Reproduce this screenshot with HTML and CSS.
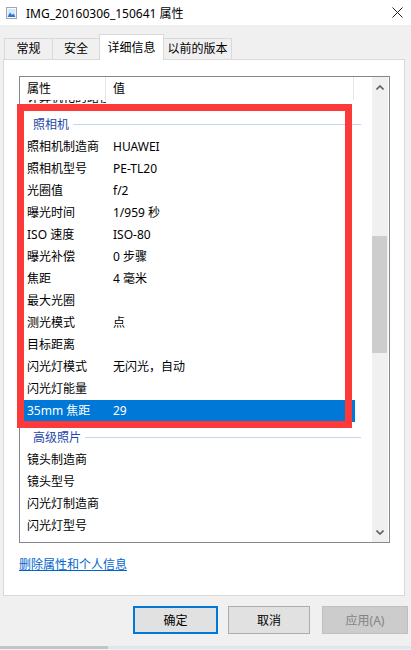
FILE: index.html
```html
<!DOCTYPE html>
<html lang="zh-CN">
<head>
    <meta charset="UTF-8">
    <meta name="viewport" content="width=device-width, initial-scale=1.0">
    <title>IMG_20160306_150641 属性</title>
    <link rel="stylesheet" href="styles.css">
</head>
<body>
    <div class="titlebar">
        <svg class="file-icon" width="11" height="12" viewBox="0 0 11 12">
            <rect x="0.5" y="0.5" width="10" height="11" fill="#fff" stroke="#9aa7b8"/>
            <rect x="1.5" y="2" width="8" height="8" fill="#d6e8fa"/>
            <path d="M1.5 10 L4 5.5 L6 8 L7.5 6.5 L9.5 10 Z" fill="#2b78d0"/>
        </svg>
        <span class="title">IMG_20160306_150641 属性</span>
        <svg class="close" width="11" height="11" viewBox="0 0 11 11">
            <path d="M0.5 0.5 L10.5 10.5 M10.5 0.5 L0.5 10.5" stroke="#222" stroke-width="1"/>
        </svg>
    </div>

    <div class="tabs">
        <div class="tab t1">常规</div>
        <div class="tab t2">安全</div>
        <div class="tab active">详细信息</div>
        <div class="tab t4">以前的版本</div>
    </div>

    <div class="panel">
        <div class="listbox">
            <div class="list-main">
                <div class="list-header">
                    <div class="col-name">属性</div>
                    <div class="col-value">值</div>
                    <div class="col-rest"></div>
                </div>
                <div class="list-body">
                    <div class="row cut"><span class="col-name">计算机化的路径</span><span class="col-value"></span></div>
                    <div class="group"><span>照相机</span><i></i></div>
                    <div class="row"><span class="col-name">照相机制造商</span><span class="col-value">HUAWEI</span></div>
                    <div class="row"><span class="col-name">照相机型号</span><span class="col-value">PE-TL20</span></div>
                    <div class="row"><span class="col-name">光圈值</span><span class="col-value">f/2</span></div>
                    <div class="row"><span class="col-name">曝光时间</span><span class="col-value">1/959 秒</span></div>
                    <div class="row"><span class="col-name">ISO 速度</span><span class="col-value">ISO-80</span></div>
                    <div class="row"><span class="col-name">曝光补偿</span><span class="col-value">0 步骤</span></div>
                    <div class="row"><span class="col-name">焦距</span><span class="col-value">4 毫米</span></div>
                    <div class="row"><span class="col-name">最大光圈</span><span class="col-value"></span></div>
                    <div class="row"><span class="col-name">测光模式</span><span class="col-value">点</span></div>
                    <div class="row"><span class="col-name">目标距离</span><span class="col-value"></span></div>
                    <div class="row"><span class="col-name">闪光灯模式</span><span class="col-value">无闪光，自动</span></div>
                    <div class="row"><span class="col-name">闪光灯能量</span><span class="col-value"></span></div>
                    <div class="row selected"><span class="col-name">35mm 焦距</span><span class="col-value">29</span></div>
                    <div class="group"><span>高级照片</span><i></i></div>
                    <div class="row"><span class="col-name">镜头制造商</span><span class="col-value"></span></div>
                    <div class="row"><span class="col-name">镜头型号</span><span class="col-value"></span></div>
                    <div class="row"><span class="col-name">闪光灯制造商</span><span class="col-value"></span></div>
                    <div class="row"><span class="col-name">闪光灯型号</span><span class="col-value"></span></div>
                </div>
                <div class="mark"></div>
            </div>
            <div class="scrollbar">
                <svg class="arrow" width="8" height="5" viewBox="0 0 8 5"><path d="M0.5 4.5 L4 1 L7.5 4.5" fill="none" stroke="#606060" stroke-width="1.6"/></svg>
                <div class="track"><div class="thumb"></div></div>
                <svg class="arrow" width="8" height="5" viewBox="0 0 8 5"><path d="M0.5 0.5 L4 4 L7.5 0.5" fill="none" stroke="#606060" stroke-width="1.6"/></svg>
            </div>
        </div>
        <a class="remove-link" href="#">删除属性和个人信息</a>
    </div>

    <div class="buttons">
        <button class="btn default">确定</button>
        <button class="btn cancel">取消</button>
        <button class="btn apply" disabled>应用(A)</button>
    </div>
    <div class="bottom-edge"></div>
</body>
</html>
```

FILE: styles.css
```css
body {
    margin: 0;
    width: 411px;
    height: 650px;
    overflow: hidden;
    background-color: #f0f0f0;
    font-family: "Noto Sans", "Noto Sans CJK SC", sans-serif;
    font-size: 12px;
    color: #000;
}
.titlebar {
    height: 25px;
    background: #fff;
    display: flex;
    align-items: center;
    padding: 0 8px 0 6px;
}
.file-icon {
    margin-top: 1px;
}
.title {
    margin-left: 9px;
    font-size: 12px;
    flex: 1;
}
.tabs {
    height: 34px;
    display: flex;
    align-items: flex-end;
    padding-left: 4px;
    position: relative;
    z-index: 1;
}
.tab {
    box-sizing: border-box;
    height: 21px;
    line-height: 20px;
    text-align: center;
    white-space: nowrap;
    border: 1px solid #d9d9d9;
    border-bottom: none;
    margin-right: -1px;
    background: #f0f0f0;
}
.tab.t1 { width: 49px; }
.tab.t2 { width: 48px; }
.tab.t4 { width: 69px; }
.tab.active {
    width: 65px;
    height: 26px;
    line-height: 25px;
    background: #fff;
    margin-bottom: -1px;
    position: relative;
    z-index: 2;
}
.panel {
    box-sizing: border-box;
    margin: 0 6px 0 3px;
    height: 537px;
    border: 1px solid #d9d9d9;
    background: #fff;
    padding: 16px 15px 0 15px;
}
.listbox {
    box-sizing: border-box;
    width: 371px;
    height: 467px;
    border: 1px solid #828790;
    display: flex;
}
.list-main {
    width: 352px;
    position: relative;
}
.list-header {
    height: 23px;
    display: flex;
    align-items: center;
}
.list-header .col-name,
.list-header .col-value {
    height: 23px;
    line-height: 23px;
    border-right: 1px solid #e5e5e5;
}
.col-name {
    box-sizing: border-box;
    width: 86px;
    padding-left: 7px;
    flex: none;
    white-space: nowrap;
}
.col-value {
    box-sizing: border-box;
    width: 248px;
    padding-left: 7px;
    flex: none;
    white-space: nowrap;
}
.list-body {
    height: 442px;
    overflow: hidden;
}
.row {
    height: 22px;
    line-height: 22px;
    display: flex;
    width: 334px;
}
.row .col-name {
    width: 86px;
    overflow: hidden;
}
.row.cut {
    margin-top: -13px;
}
.row.selected {
    background: #0078d7;
    color: #fff;
    width: 335px;
}
.group {
    height: 27px;
    display: flex;
    align-items: center;
    padding: 3px 0 0 13px;
    box-sizing: border-box;
    color: #1e47a8;
}
.group i {
    flex: 1;
    height: 1px;
    background: #c5d6ee;
    margin: 0 11px 0 4px;
}
.mark {
    position: absolute;
    left: -3px;
    top: 27px;
    width: 321px;
    height: 310px;
    border: 7px solid #fd3a3a;
    pointer-events: none;
}
.scrollbar {
    width: 16px;
    background: #f0f0f0;
    display: flex;
    flex-direction: column;
    align-items: center;
}
.arrow {
    margin: 8px 0 4px;
    flex: none;
}
.scrollbar .arrow:last-child {
    margin: 4px 0 7px;
}
.track {
    flex: 1;
    width: 16px;
    position: relative;
}
.thumb {
    position: absolute;
    left: 0;
    width: 15px;
    top: 142px;
    height: 117px;
    background: #cdcdcd;
}
.remove-link {
    display: inline-block;
    margin: 14px 0 0 0;
    color: #0066cc;
    text-decoration: underline;
    line-height: 16px;
}
.buttons {
    display: flex;
    padding: 10px 0 0 133px;
}
.btn {
    box-sizing: border-box;
    height: 28px;
    font-family: inherit;
    font-size: 12px;
    background: #e1e1e1;
    border: 1px solid #adadad;
    color: #000;
    padding: 0;
}
.btn.default {
    width: 85px;
    border: 2px solid #0078d7;
}
.btn.cancel {
    width: 82px;
    margin-left: 10px;
}
.btn.apply {
    width: 86px;
    margin-left: 12px;
    background: #cccccc;
    border-color: #bfbfbf;
    color: #838383;
}
.bottom-edge {
    margin-top: 12px;
    height: 3px;
    background: linear-gradient(to right, #c4c4c4 0, #c4c4c4 108px, #dfe6ee 108px);
}
```
